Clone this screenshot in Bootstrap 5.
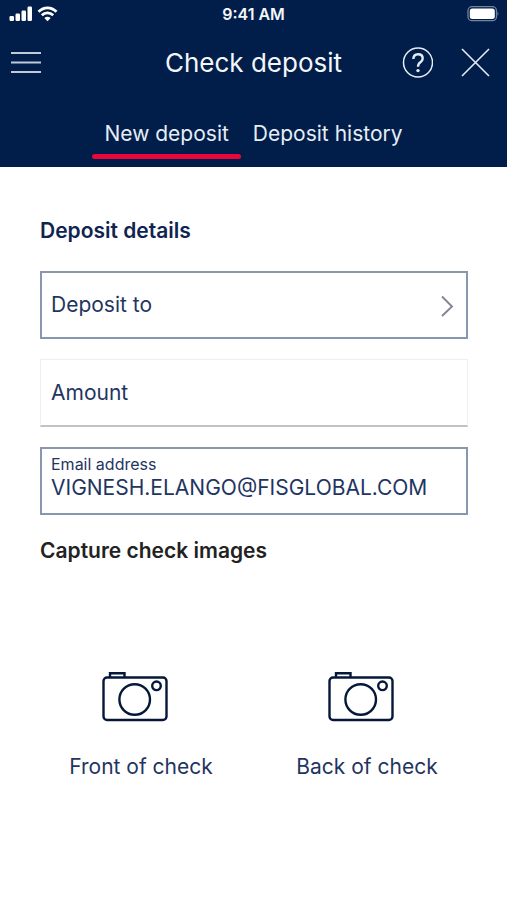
<!DOCTYPE html>
<html lang="en">
<head>
<meta charset="utf-8">
<meta name="viewport" content="width=device-width, initial-scale=1">
<title>Check deposit</title>
<link href="https://cdn.jsdelivr.net/npm/bootstrap@5.3.0/dist/css/bootstrap.min.css" rel="stylesheet">
<style>
  :root { --navy: #001e49; --ink: #1f3561; --rule: #8997ae; }
  body { font-family: Inter, "Liberation Sans", sans-serif; color: var(--ink); font-size: 21px; line-height: 28px; }
  svg { display: block; }
  .app-head { background: var(--navy); color: #f3f6fa; padding-bottom: 8px; }
  .three-up { display: grid; grid-template-columns: 1fr auto 1fr; align-items: center; }
  .status { height: 28px; padding: 0 8px; font-size: 16px; line-height: 20px; font-weight: 600; }
  .title-row { height: 70px; }
  .title-row h1 { font-size: 26px; line-height: 32px; font-weight: 400; }
  .menu-btn { margin-left: 10px; }
  .head-tools { gap: 26px; margin-right: 16px; }
  .tabs { padding-top: 18px; }
  .tabs a { color: #e6edf6; padding: 4px 12px 11px; position: relative; }
  .tabs a.current::after { content: ""; position: absolute; left: 0; right: 0; bottom: 0; height: 5px; border-radius: 3px; background: #e8063a; }
  .page { padding: 50px 39px 32px 40px; }
  .section-title { font-size: 21px; line-height: 28px; font-weight: 600; color: #0f2550; }
  .fields { gap: 20px; margin-top: 26px; }
  .field { height: 68px; border: 2px solid var(--rule); padding: 0 9px; background: #fff; color: var(--ink); }
  .field input { color: inherit; min-width: 0; }
  .field-soft { border: 1px solid #eeeeef; border-bottom: 2px solid #c0c2c6; padding: 0 10px; }
  .field-mail { padding-top: 4px; }
  .field-mail label { font-size: 16px; line-height: 22px; }
  .field-mail input { line-height: 26px; }
  .capture-title { margin-top: 22px; color: #222; }
  .captures { margin: 107px -12px 0; }
  .captures button { color: var(--ink); font-size: 21px; line-height: 28px; }
  .captures svg { margin: 0 12px 31px 0; color: #06183a; }
</style>
</head>
<body class="bg-white">
<header class="app-head">
  <div class="status three-up">
    <div class="d-flex align-items-center gap-1">
      <svg width="25" height="16" viewBox="0 0 25 16" fill="#fff" aria-hidden="true"><rect x="1.500" y="10" width="4.500" height="5" rx="1.200"/><rect x="7.500" y="7.500" width="4.500" height="7.500" rx="1.200"/><rect x="13.500" y="4.500" width="4.500" height="10.500" rx="1.200"/><rect x="19.500" y="0.500" width="4.500" height="14.500" rx="1.200"/></svg>
      <svg width="21" height="16" viewBox="0 0 21 16" fill="none" stroke="#fff" stroke-width="2.800" aria-hidden="true"><path d="M1.500 5.800Q5.500 1.900 10.500 1.900T19.500 5.800M4.800 9.200Q7.300 6.800 10.500 6.800T16.200 9.200"/><path d="M7.300 11.900Q10.500 9.400 13.700 11.900L10.500 15.200Z" fill="#fff" stroke="none"/></svg>
    </div>
    <div>9:41 AM</div>
    <svg class="ms-auto" width="33" height="16" viewBox="0 0 33 16" aria-hidden="true"><rect x="2" y="0.700" width="28.500" height="14" rx="4" fill="none" stroke="#71839f" stroke-width="1.300"/><rect x="3.800" y="2.500" width="25" height="10.400" rx="2.500" fill="#fff"/><path d="M31.500 5.700Q33.500 7.700 31.500 9.700Z" fill="#71839f"/></svg>
  </div>
  <div class="title-row three-up">
    <button type="button" class="menu-btn btn p-0 border-0 me-auto" aria-label="Menu">
      <svg width="32" height="32" viewBox="0 0 32 32" stroke="#c0cad9" stroke-width="2"><path d="M1 6H31M1 15.500H31M1 25H31"/></svg>
    </button>
    <h1 class="m-0">Check deposit</h1>
    <div class="head-tools d-flex justify-content-end">
      <button type="button" class="btn p-0 border-0" aria-label="Help">
        <svg width="32" height="32" viewBox="0 0 32 32" fill="none" stroke="#e6ecf4"><circle cx="17" cy="15.500" r="14.500" stroke-width="1.500"/><path d="M12.400 12Q12.400 7.200 17 7.200Q21.700 7.200 21.700 11.400Q21.700 13.500 19.400 15.200Q17 16.800 17 19.800" stroke-width="2.400"/><circle cx="17" cy="23.600" r="1.700" fill="#e6ecf4" stroke="none"/></svg>
      </button>
      <button type="button" class="btn p-0 border-0" aria-label="Close">
        <svg width="32" height="32" viewBox="0 0 32 32" stroke="#e6ecf4" stroke-width="1.600"><path d="M3 2L30 29M30 2L3 29"/></svg>
      </button>
    </div>
  </div>
  <nav class="tabs d-flex justify-content-center" aria-label="Check deposit sections">
    <a href="#new" class="current text-decoration-none" aria-current="page">New deposit</a>
    <a href="#history" class="text-decoration-none">Deposit history</a>
  </nav>
</header>
<main class="page">
  <h2 class="section-title m-0">Deposit details</h2>
  <form class="fields d-flex flex-column">
    <button type="button" class="field w-100 d-flex align-items-center justify-content-between text-start">
      <span>Deposit to</span>
      <svg width="20" height="24" viewBox="0 0 20 24" fill="none" stroke="#808592" stroke-width="1.900" aria-hidden="true"><path d="M5 3.500L15 13.500L5 23"/></svg>
    </button>
    <div class="field field-soft d-flex align-items-center gap-2">
      <label for="amount">Amount</label>
      <input id="amount" type="text" inputmode="decimal" class="flex-grow-1 border-0 p-0 bg-transparent">
    </div>
    <div class="field field-mail d-flex flex-column">
      <label for="email">Email address</label>
      <input id="email" type="email" class="w-100 border-0 p-0 bg-transparent" value="VIGNESH.ELANGO@FISGLOBAL.COM">
    </div>
  </form>
  <h2 class="section-title capture-title mb-0">Capture check images</h2>
  <div class="captures row g-0">
    <div class="col-6 d-flex justify-content-center">
      <button type="button" class="btn p-0 border-0 rounded-0 d-flex flex-column align-items-center">
        <svg width="66" height="50" viewBox="0 0 66 50" fill="none" stroke="currentColor" stroke-width="2.400" aria-hidden="true"><rect x="1.500" y="5.500" width="63" height="42.500" rx="3.500"/><path d="M8 5.500V1.300H22.500V5.500"/><circle cx="32.700" cy="27.500" r="15.300"/><circle cx="54.500" cy="13.800" r="4.300"/></svg>
        <span>Front of check</span>
      </button>
    </div>
    <div class="col-6 d-flex justify-content-center">
      <button type="button" class="btn p-0 border-0 rounded-0 d-flex flex-column align-items-center">
        <svg width="66" height="50" viewBox="0 0 66 50" fill="none" stroke="currentColor" stroke-width="2.400" aria-hidden="true"><rect x="1.500" y="5.500" width="63" height="42.500" rx="3.500"/><path d="M8 5.500V1.300H22.500V5.500"/><circle cx="32.700" cy="27.500" r="15.300"/><circle cx="54.500" cy="13.800" r="4.300"/></svg>
        <span>Back of check</span>
      </button>
    </div>
  </div>
</main>
<script src="https://cdn.jsdelivr.net/npm/bootstrap@5.3.0/dist/js/bootstrap.bundle.min.js"></script>
</body>
</html>
